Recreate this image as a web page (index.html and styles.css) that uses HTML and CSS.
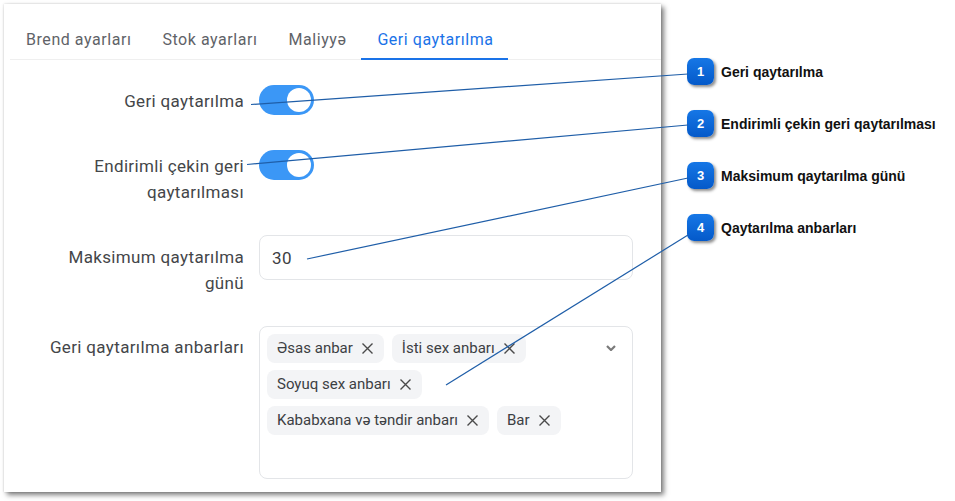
FILE: index.html
```html
<!DOCTYPE html>
<html lang="az">
<head>
<meta charset="utf-8">
<title>Geri qaytarılma</title>
<link rel="stylesheet" href="styles.css">
</head>
<body>
<div class="page">
  <div class="card">
    <div class="tabs">
      <div class="tab">Brend ayarları</div>
      <div class="tab">Stok ayarları</div>
      <div class="tab">Maliyyə</div>
      <div class="tab tab--active">Geri qaytarılma</div>
    </div>
    <div class="form">
      <div class="row row--toggle">
        <div class="label label--toggle">Geri qaytarılma</div>
        <div class="toggle"><span class="thumb"></span></div>
      </div>
      <div class="row row--toggle">
        <div class="label label--toggle">Endirimli çekin geri qaytarılması</div>
        <div class="toggle"><span class="thumb"></span></div>
      </div>
      <div class="row">
        <div class="label label--field">Maksimum qaytarılma günü</div>
        <div class="input">30</div>
      </div>
      <div class="row">
        <div class="label label--field">Geri qaytarılma anbarları</div>
        <div class="multi">
          <div class="tags">
            <span class="tag">Əsas anbar<svg class="x" viewBox="0 0 13 13"><path d="M1.5 1.5L11.5 11.5M11.5 1.5L1.5 11.5"/></svg></span>
            <span class="tag">İsti sex anbarı<svg class="x" viewBox="0 0 13 13"><path d="M1.5 1.5L11.5 11.5M11.5 1.5L1.5 11.5"/></svg></span>
            <span class="tag">Soyuq sex anbarı<svg class="x" viewBox="0 0 13 13"><path d="M1.5 1.5L11.5 11.5M11.5 1.5L1.5 11.5"/></svg></span>
            <span class="tag">Kababxana və təndir anbarı<svg class="x" viewBox="0 0 13 13"><path d="M1.5 1.5L11.5 11.5M11.5 1.5L1.5 11.5"/></svg></span>
            <span class="tag">Bar<svg class="x" viewBox="0 0 13 13"><path d="M1.5 1.5L11.5 11.5M11.5 1.5L1.5 11.5"/></svg></span>
          </div>
          <svg class="chevron" viewBox="0 0 10 6"><polyline points="1,1 5,5 9,1"/></svg>
        </div>
      </div>
    </div>
  </div>
  <ol class="callouts">
    <li class="callout"><span class="badge">1</span><span class="callout-text">Geri qaytarılma</span></li>
    <li class="callout"><span class="badge">2</span><span class="callout-text">Endirimli çekin geri qaytarılması</span></li>
    <li class="callout"><span class="badge">3</span><span class="callout-text">Maksimum qaytarılma günü</span></li>
    <li class="callout"><span class="badge">4</span><span class="callout-text">Qaytarılma anbarları</span></li>
  </ol>
  <svg class="leaders" viewBox="0 0 955 501" width="955" height="501">
    <line x1="251" y1="104.5" x2="688" y2="74"/>
    <line x1="247" y1="164.5" x2="688" y2="125"/>
    <line x1="307" y1="259" x2="688" y2="178"/>
    <line x1="446" y1="385" x2="688" y2="235"/>
  </svg>
</div>
</body>
</html>
```
FILE: styles.css
```css
* { box-sizing: border-box; }
html, body { margin: 0; padding: 0; background: #fff; }
body { font-family: Roboto, "Noto Sans", sans-serif; color: #3c4043; }

.page {
  position: relative;
  width: 955px;
  height: 501px;
  display: flex;
  align-items: flex-start;
  padding: 4px 0 0 4px;
}

.card {
  width: 657px;
  background: #fff;
  box-shadow: 0 0 2px rgba(0,0,0,.18), 3px 3px 5px rgba(0,0,0,.5);
}

.tabs {
  display: flex;
  margin-left: 6px;
  border-bottom: 1px solid #efefef;
}
.tab {
  padding: 24px 15px 6px 16px;
  line-height: 24px;
  font-size: 16px;
  letter-spacing: 0.55px;
  color: #5f6368;
  border-bottom: 2px solid transparent;
  margin-bottom: -1px;
}
.tab--active {
  color: #1a73e8;
  border-bottom-color: #1a73e8;
}

.form {
  display: flex;
  flex-direction: column;
  gap: 30px;
  padding: 25px 0 13px 35px;
}
.row {
  display: grid;
  grid-template-columns: 205px 374px;
  column-gap: 15px;
  align-items: start;
}
.row--toggle { min-height: 35px; }

.label {
  font-size: 17px;
  line-height: 26px;
  letter-spacing: 0.35px;
  text-align: right;
  color: #444649;
}
.label--toggle { padding-top: 3px; }
.label--field { padding-top: 8.5px; }

.toggle {
  width: 55px;
  height: 30px;
  border-radius: 15px;
  background: #3b97f6;
  display: flex;
  justify-content: flex-end;
  align-items: center;
  padding-right: 3px;
}
.thumb {
  width: 24px;
  height: 24px;
  border-radius: 50%;
  background: #fff;
}

.input {
  height: 45px;
  border: 1px solid #e3e5e8;
  border-radius: 8px;
  padding: 0 12px;
  display: flex;
  align-items: center;
  font-size: 17px;
  letter-spacing: 0.4px;
  color: #3c4043;
}

.multi {
  min-height: 153px;
  border: 1px solid #e3e5e8;
  border-radius: 8px;
  display: flex;
  align-items: flex-start;
}
.tags {
  flex: 1;
  display: flex;
  flex-wrap: wrap;
  align-content: flex-start;
  gap: 7px 8px;
  padding: 7px 0 7px 7px;
}
.tag {
  height: 29px;
  display: inline-flex;
  align-items: center;
  gap: 8px;
  padding: 0 10px;
  background: #f3f4f6;
  border-radius: 8px;
  font-size: 15px;
  color: #3c4043;
  white-space: nowrap;
}
.x {
  width: 13px;
  height: 13px;
  fill: none;
  stroke: #4a4a4a;
  stroke-width: 1.4;
}
.chevron {
  width: 10px;
  height: 6px;
  margin: 18px 16px 0 40px;
  fill: none;
  stroke: #7a7a7a;
  stroke-width: 2.2;
  flex: none;
}

.callouts {
  list-style: none;
  margin: 54px 0 0 26px;
  padding: 0;
  display: flex;
  flex-direction: column;
  gap: 25px;
}
.callout {
  display: flex;
  align-items: center;
  gap: 7px;
}
.badge {
  width: 27px;
  height: 27px;
  border-radius: 7px;
  background: linear-gradient(#1677e6, #0459c9);
  box-shadow: 2px 2px 3px rgba(0,0,0,.45);
  color: #fff;
  font: bold 13px "Liberation Sans", Arial, sans-serif;
  display: flex;
  align-items: center;
  justify-content: center;
}
.callout-text {
  font: bold 14px "Liberation Sans", Arial, sans-serif;
  color: #111;
}

.leaders {
  position: absolute;
  left: 0;
  top: 0;
  pointer-events: none;
}
.leaders line {
  stroke: #1f5ea8;
  stroke-width: 1.2;
}
```
